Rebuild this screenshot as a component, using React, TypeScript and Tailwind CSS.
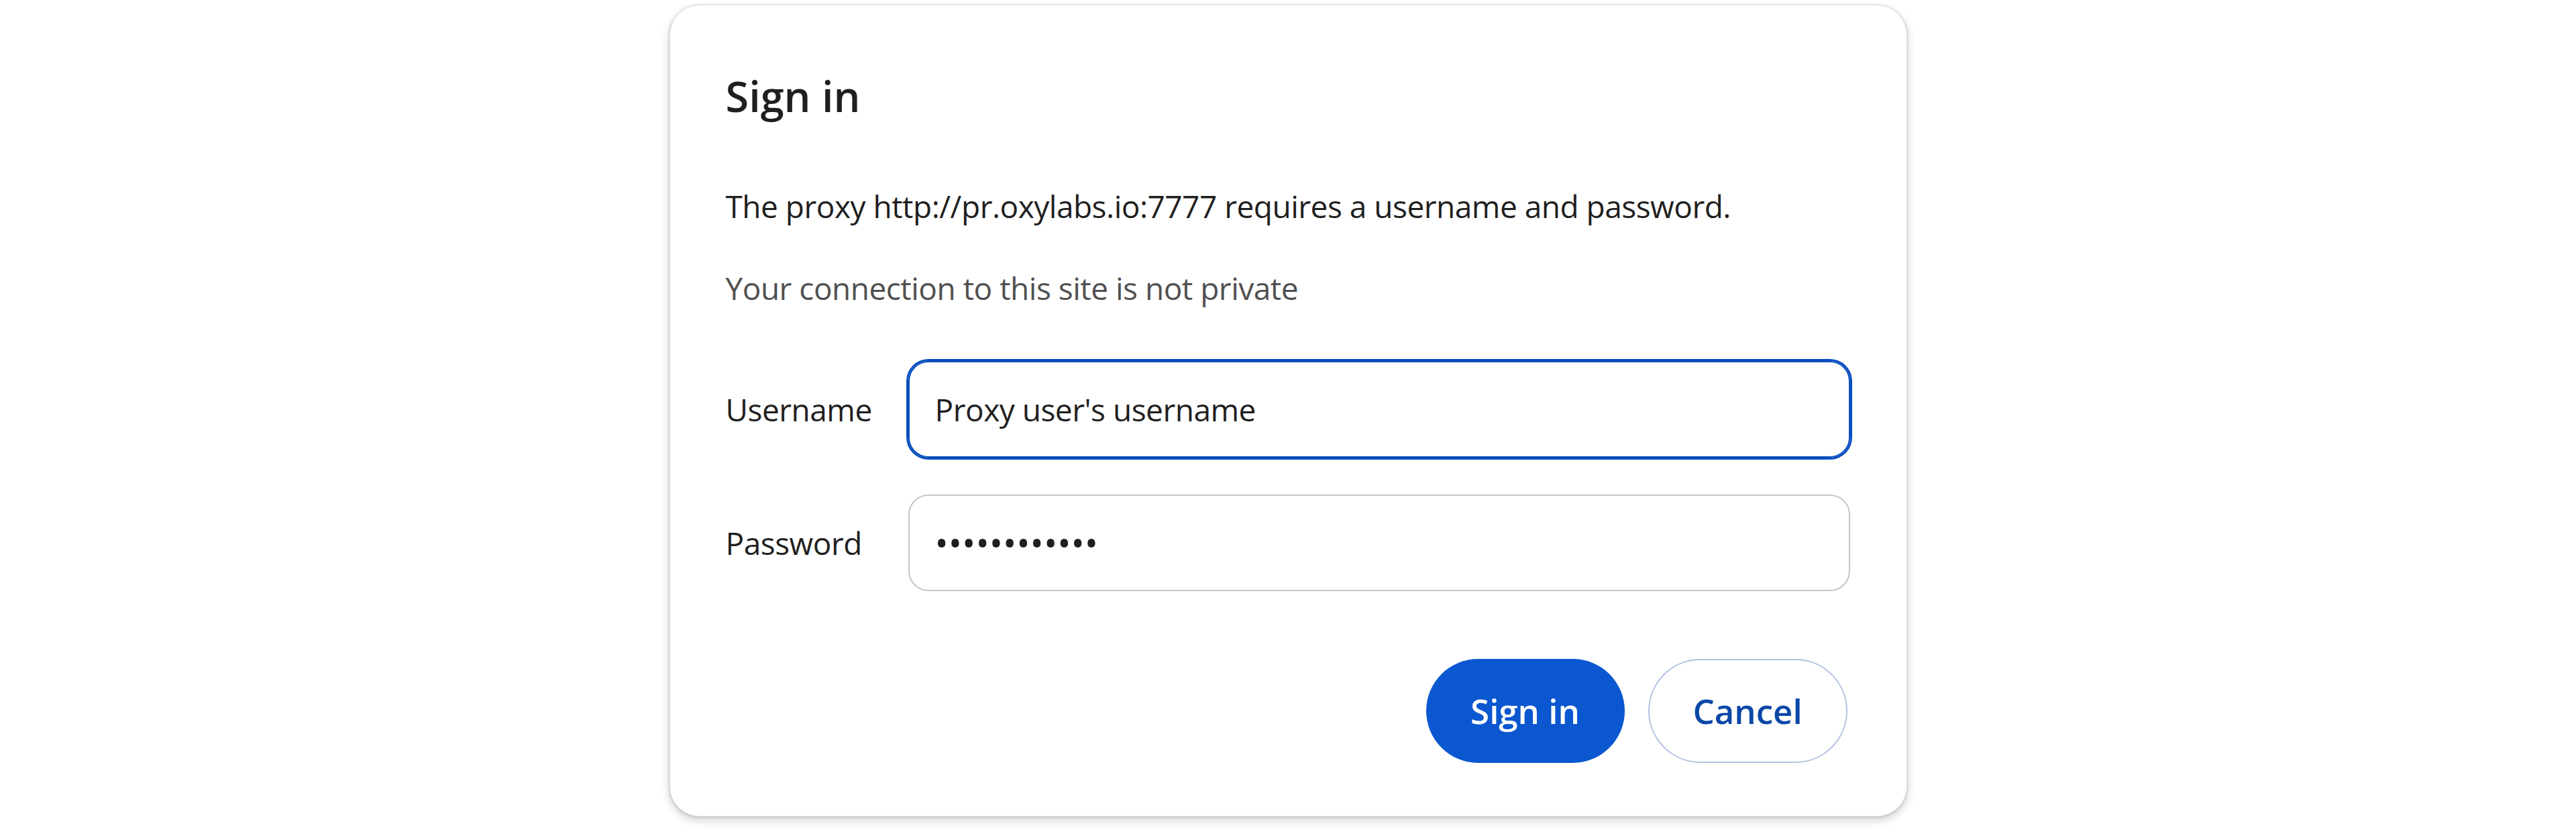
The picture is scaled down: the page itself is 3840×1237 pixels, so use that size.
import React from "react";

function Field({ label, focused, children }: { label: string; focused?: boolean; children: React.ReactNode }) {
    return (
        <div className="flex items-center">
            <span className="w-[272px] shrink-0 text-[46px] leading-none tracking-[-0.5px] text-[#1f1f1f]">{label}</span>
            <div
                className={
                    focused
                        ? "flex h-[144px] flex-1 items-center rounded-[30px] border-2 border-[#0b4fc0] pl-[38px] ring-[3px] ring-[#0b4fc0]"
                        : "flex h-[144px] flex-1 items-center rounded-[30px] border-2 border-[#c7c7c7] pl-[38px]"
                }
            >
                {children}
            </div>
        </div>
    );
}

export default function App() {
    return (
        <div className="flex min-h-[1237px] w-full justify-center bg-white pt-[7px] font-['Open_Sans','Noto_Sans',sans-serif]">
            <div className="flex h-[1210px] w-[1845px] flex-col rounded-[45px] border border-[#e0e0e0] bg-white pl-[83px] pr-[84px] shadow-[0_6px_12px_2px_rgba(0,0,0,0.13),0_1px_4px_rgba(0,0,0,0.18)]">
                <h1 className="mt-[103px] text-[63px] font-semibold leading-none text-[#1f1f1f]">Sign in</h1>
                <p className="mt-[110px] text-[46px] leading-none tracking-[-0.5px] text-[#1f1f1f]">
                    The proxy http://pr.oxylabs.io:7777 requires a username and password.
                </p>
                <p className="mt-[76px] text-[46px] leading-none tracking-[-0.5px] text-[#505050]">
                    Your connection to this site is not private
                </p>

                <div className="mt-[86px] flex flex-col gap-[55px]">
                    <Field label="Username" focused>
                        <span className="text-[46px] leading-none tracking-[-0.5px] text-[#1f1f1f]">Proxy user's username</span>
                    </Field>
                    <Field label="Password">
                        <span className="text-[54px] leading-none tracking-[0px] text-[#1f1f1f]">••••••••••••</span>
                    </Field>
                </div>

                <div className="mr-[4px] mt-[101px] flex justify-end gap-[35px]">
                    <button className="flex h-[155px] w-[296px] items-center justify-center rounded-full bg-[#0b57d0] text-[51px] font-semibold text-white">
                        Sign in
                    </button>
                    <button className="flex h-[155px] w-[297px] items-center justify-center rounded-full border-2 border-[#b0c0e0] bg-white text-[51px] font-semibold text-[#0a47a8]">
                        Cancel
                    </button>
                </div>
            </div>
        </div>
    );
}
